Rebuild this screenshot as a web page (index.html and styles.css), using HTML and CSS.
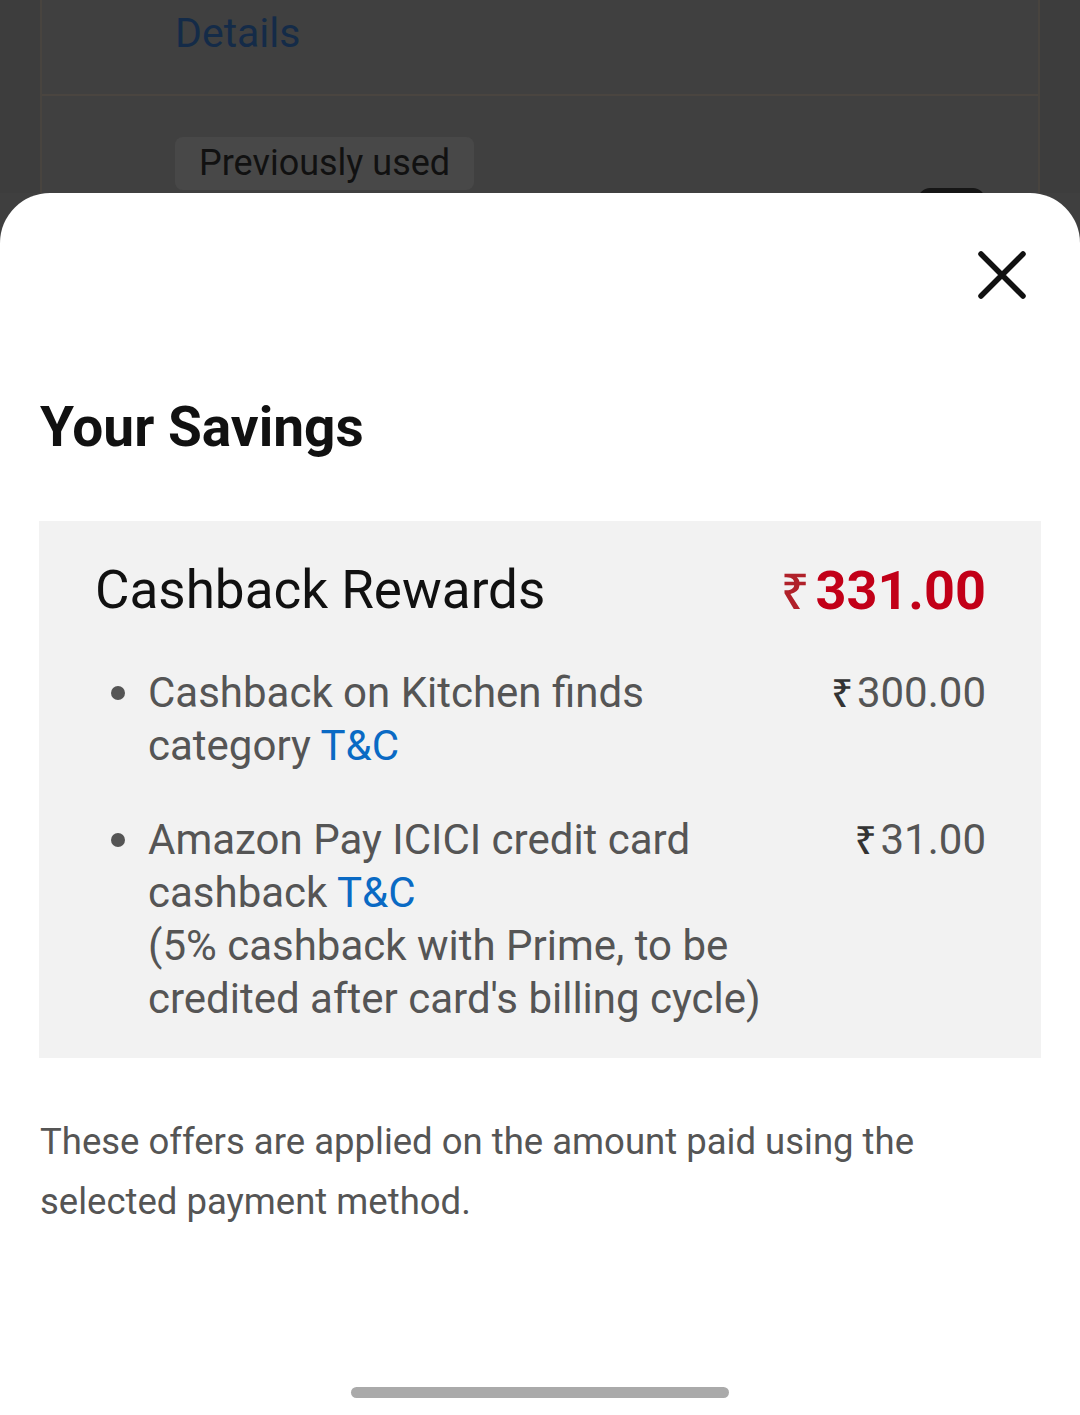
FILE: index.html
```html
<!DOCTYPE html>
<html lang="en">
<head>
<meta charset="utf-8">
<title>Your Savings</title>
<link rel="stylesheet" href="styles.css">
</head>
<body>
<div class="backdrop">
  <div class="bg-card">
    <div class="bg-row bg-row-top"><span class="bg-link">Details</span></div>
    <div class="bg-row bg-row-bottom">
      <span class="bg-badge">Previously used</span>
      <span class="bg-chip"></span>
    </div>
  </div>
</div>
<div class="sheet">
  <div class="sheet-header">
    <button class="close" aria-label="Close">
      <svg width="50" height="50" viewBox="0 0 50 50"><path d="M4 4 L46 46 M46 4 L4 46" stroke="#111" stroke-width="5.5" stroke-linecap="round" fill="none"/></svg>
    </button>
  </div>
  <h1 class="title">Your Savings</h1>
  <div class="card">
    <div class="card-head">
      <span class="card-title">Cashback Rewards</span>
      <span class="total"><span class="rupee">₹</span>331.00</span>
    </div>
    <ul class="items">
      <li class="item">
        <span class="bullet"></span>
        <div class="item-text">Cashback on Kitchen finds<br>category <a class="link" href="#">T&amp;C</a></div>
        <div class="item-amt"><span class="rupee-sm">₹</span>300.00</div>
      </li>
      <li class="item">
        <span class="bullet"></span>
        <div class="item-text">Amazon Pay ICICI credit card<br>cashback <a class="link" href="#">T&amp;C</a><br>(5% cashback with Prime, to be<br>credited after card's billing cycle)</div>
        <div class="item-amt"><span class="rupee-sm">₹</span>31.00</div>
      </li>
    </ul>
  </div>
  <p class="note">These offers are applied on the amount paid using the<br>selected payment method.</p>
  <div class="home-indicator"></div>
</div>
</body>
</html>
```
FILE: styles.css
```css
* { box-sizing: border-box; }
html, body { margin: 0; padding: 0; }
body {
  background: #3f3f3f;
  font-family: Roboto, "Noto Sans", sans-serif;
  width: 1080px;
  min-height: 1415px;
}
.backdrop {
  height: 193px;
  overflow: hidden;
  background: #3d3d3d;
}
.bg-card {
  margin: 0 40px;
  border-left: 2px solid #48443f;
  border-right: 2px solid #48443f;
  background: #404040;
}
.bg-row-top {
  height: 96px;
  border-bottom: 2px solid #4a4540;
  display: flex;
  align-items: flex-start;
  padding-left: 133px;
}
.bg-link {
  color: #142b48;
  font-size: 41px;
  line-height: 66px;
}
.bg-row-bottom {
  display: flex;
  align-items: flex-start;
  padding: 41px 53px 0 133px;
  height: 120px;
}
.bg-badge {
  background: #484848;
  color: #111;
  font-size: 36px;
  line-height: 53px;
  padding: 0 24px;
  border-radius: 8px;
}
.bg-chip {
  margin-left: auto;
  margin-top: 51px;
  width: 67px;
  height: 40px;
  background: #161616;
  border-radius: 12px;
}
.sheet {
  background: #fff;
  border-radius: 50px 50px 0 0;
  min-height: 1222px;
  display: flex;
  flex-direction: column;
  position: relative;
}
.sheet-header {
  display: flex;
  justify-content: flex-end;
  padding: 57px 53px 0 0;
}
.close {
  border: 0;
  background: none;
  padding: 0;
  width: 50px;
  height: 50px;
  display: block;
}
.close svg { display: block; }
.title {
  margin: 95px 40px 0;
  font-size: 55px;
  line-height: 64px;
  font-weight: 700;
  color: #111;
}
.card {
  margin: 62px 39px 0;
  background: #f2f2f2;
  padding: 39px 55px 33px 56px;
}
.card-head {
  display: flex;
  justify-content: space-between;
  align-items: center;
  height: 60px;
}
.card-title {
  font-size: 53px;
  line-height: 60px;
  color: #111;
}
.total {
  font-size: 54px;
  line-height: 60px;
  font-weight: 700;
  color: #c20018;
}
.rupee {
  font-family: "Noto Sans", sans-serif;
  font-weight: 500;
  font-size: 50px;
  color: #b0212a;
  margin-right: 6px;
}
.items {
  list-style: none;
  margin: 46px 0 0;
  padding: 0;
  display: flex;
  flex-direction: column;
  gap: 41px;
}
.item {
  display: flex;
  align-items: flex-start;
  font-size: 42px;
  line-height: 53px;
  color: #555;
}
.bullet {
  flex: 0 0 53px;
  height: 53px;
  display: flex;
  align-items: center;
}
.bullet::after {
  content: "";
  width: 14px;
  height: 14px;
  margin-left: 16px;
  border-radius: 50%;
  background: #555;
}
.item-text {
  flex: 0 1 650px;
}
.link {
  color: #0a6ac4;
  text-decoration: none;
}
.item-amt {
  margin-left: auto;
  white-space: nowrap;
}
.rupee-sm {
  font-family: "Noto Sans", sans-serif;
  font-weight: 500;
  font-size: 38px;
  color: #333;
  margin-right: 4px;
}
.note {
  margin: 54px 40px 0;
  font-size: 36.5px;
  line-height: 60px;
  color: #555;
}
.home-indicator {
  margin: auto auto 17px;
  width: 378px;
  height: 11px;
  border-radius: 6px;
  background: #aaa;
}
```
